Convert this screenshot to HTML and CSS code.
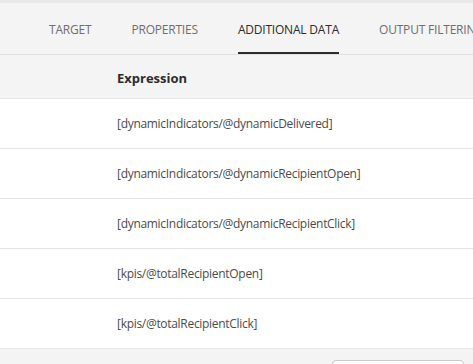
FILE: index.html
```html
<!DOCTYPE html>
<html>

<head>
    <meta charset="UTF-8">
    <title>Additional data</title>
    <link rel="stylesheet" href="styles.css">
</head>

<body>
    <div class="panel">
        <div class="tabs">
            <div class="tab">TARGET</div>
            <div class="tab">PROPERTIES</div>
            <div class="tab active">ADDITIONAL DATA</div>
            <div class="tab">OUTPUT FILTERING</div>
        </div>
        <div class="head">
            <span class="cell">Expression</span>
        </div>
        <div class="row"><span class="cell">[dynamicIndicators/@dynamicDelivered]</span></div>
        <div class="row"><span class="cell">[dynamicIndicators/@dynamicRecipientOpen]</span></div>
        <div class="row"><span class="cell">[dynamicIndicators/@dynamicRecipientClick]</span></div>
        <div class="row"><span class="cell">[kpis/@totalRecipientOpen]</span></div>
        <div class="row"><span class="cell">[kpis/@totalRecipientClick]</span></div>
        <div class="footer">
            <div class="btn"></div>
        </div>
    </div>
</body>

</html>
```

FILE: styles.css
```css
body {
    margin: 0;
    font-family: "Open Sans", "Noto Sans", sans-serif;
    color: #4b4b4b;
    overflow: hidden;
    height: 364px;
}

.panel {
    width: 473px;
    border-top: 3px solid #e8e8e8;
}

.tabs {
    display: flex;
    gap: 40px;
    height: 51px;
    padding-left: 49px;
    background-color: #f4f4f4;
    border-bottom: 1px solid #e1e1e1;
    white-space: nowrap;
    overflow: hidden;
}

.tab {
    display: flex;
    align-items: center;
    font-size: 12px;
    color: #6e6e6e;
    letter-spacing: -0.2px;
    border-bottom: 2px solid transparent;
    padding-top: 3px;
}

.tab.active {
    color: #2c2c2c;
    border-bottom-color: #2c2c2c;
}

.head {
    display: flex;
    align-items: center;
    height: 40px;
    padding-top: 3px;
    background-color: #f4f4f4;
    border-bottom: 1px solid #e6e6e6;
    font-weight: bold;
    font-size: 13px;
    color: #2c2c2c;
}

.cell {
    padding-left: 117px;
}

.row {
    display: flex;
    align-items: center;
    height: 49px;
    border-bottom: 1px solid #e6e6e6;
    font-size: 12px;
    letter-spacing: -0.3px;
    background-color: #fff;
}

.footer {
    height: 17px;
    background-color: #f4f4f4;
    overflow: hidden;
}

.btn {
    margin: 11px 0 0 332px;
    width: 130px;
    height: 30px;
    border: 1px solid #cacaca;
    border-radius: 4px;
    background-color: #fff;
}
```
